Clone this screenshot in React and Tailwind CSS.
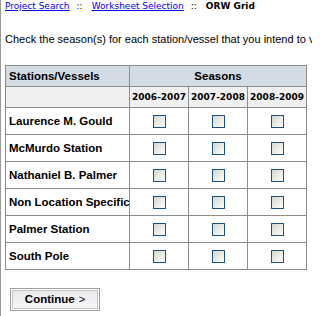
import React from "react";

const stations = [
  "Laurence M. Gould",
  "McMurdo Station",
  "Nathaniel B. Palmer",
  "Non Location Specific",
  "Palmer Station",
  "South Pole",
];
const seasons = ["2006-2007", "2007-2008", "2008-2009"];

function Box() {
  return (
    <span className="inline-block w-[13px] h-[13px] border border-[#1c5180] bg-linear-to-br from-[#d6d6d0] to-[#fdfdfc] align-middle" />
  );
}

export default function App() {
  return (
    <div className="w-[312px] h-[316px] overflow-hidden bg-white border-l border-[#999999] pl-[4px]">
      <div className="h-[13px] leading-[13px] text-[9px] whitespace-nowrap text-black" style={{ fontFamily: '"DejaVu Sans", sans-serif' }}>
        <a className="text-[#0000ee] underline" href="#">Project Search</a>
        <span className="pl-[7px] pr-[9px]">::</span>
        <a className="text-[#0000ee] underline" href="#">Worksheet Selection</a>
        <span className="pl-[7px] pr-[9px]">::</span>
        <span className="font-bold">ORW Grid</span>
      </div>
      <div className="mt-[19px] leading-[14px] text-[11px] whitespace-nowrap text-black" style={{ fontFamily: '"Liberation Sans", Arial, sans-serif' }}>
        Check the season(s) for each station/vessel that you intend to visit.
      </div>
      <table className="mt-[19px] border-collapse table-fixed w-[302px] text-black" style={{ fontFamily: '"Liberation Sans", Arial, sans-serif' }}>
        <colgroup>
          <col className="w-[124px]" />
          <col className="w-[59px]" />
          <col className="w-[59px]" />
          <col className="w-[59px]" />
        </colgroup>
        <tbody>
          <tr className="h-[21px] bg-[#d3dbe5]">
            <td className="border border-[#8c8c8c] px-[3px] text-[11.5px] font-bold leading-[14px]">Stations/Vessels</td>
            <td colSpan={3} className="border border-[#8c8c8c] text-center text-[11.5px] font-bold leading-[14px]">Seasons</td>
          </tr>
          <tr className="h-[21px] bg-[#f0f0f0]">
            <td className="border border-[#8c8c8c]"></td>
            {seasons.map((s) => (
              <td key={s} className="border border-[#8c8c8c] text-center text-[9px] font-bold leading-[12px] whitespace-nowrap" style={{ fontFamily: '"DejaVu Sans", sans-serif' }}>{s}</td>
            ))}
          </tr>
          {stations.map((st) => (
            <tr key={st} className="h-[27px] bg-white">
              <td className="border border-[#8c8c8c] px-[3px] text-[11.5px] font-bold leading-[14px] whitespace-nowrap overflow-hidden">{st}</td>
              {seasons.map((s) => (
                <td key={s} className="border border-[#8c8c8c] text-center leading-none">
                  <Box />
                </td>
              ))}
            </tr>
          ))}
        </tbody>
      </table>
      <div className="mt-[18px] ml-[5px]">
        <button className="w-[90px] h-[23px] border border-[#a0a0a0] p-px bg-white block">
          <span className="flex items-center justify-center w-full h-full border border-[#c4c4c4] bg-linear-to-b from-[#e9e9e9] to-[#f7f7f7] text-[11.5px] text-black leading-none" style={{ fontFamily: '"Liberation Sans", Arial, sans-serif' }}>
            <span className="font-bold">Continue</span>
            <span className="ml-[4px] text-[11px]">&gt;</span>
          </span>
        </button>
      </div>
    </div>
  );
}
